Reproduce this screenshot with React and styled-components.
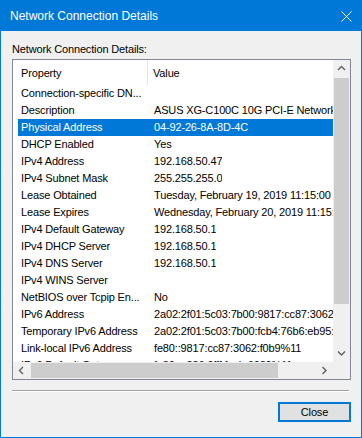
import React from 'react';
import styled, { createGlobalStyle } from 'styled-components';

const GlobalStyle = createGlobalStyle`
    html, body {
        margin: 0;
        padding: 0;
        background: #f0f0f0;
    }
    * {
        box-sizing: border-box;
    }
`;

const Window = styled.div`
    width: 362px;
    height: 438px;
    display: flex;
    flex-direction: column;
    background: #f0f0f0;
    border: 1px solid #0078d7;
    font-family: 'Liberation Sans', Arial, sans-serif;
    color: #000;
`;

const TitleBar = styled.div`
    height: 30px;
    flex-shrink: 0;
    display: flex;
    align-items: center;
    justify-content: space-between;
    padding: 0 9px 0 9px;
    background: #0078d7;
    color: #fff;
    font-size: 12px;
`;

const Body = styled.div`
    flex: 1;
    display: flex;
    flex-direction: column;
    padding: 10px 10px 15px 11px;
    font-size: 11px;
    letter-spacing: -0.15px;
`;

const Label = styled.div`
    height: 16px;
    line-height: 16px;
    margin-bottom: 2px;
`;

const ListBox = styled.div`
    height: 321px;
    border: 1px solid #828790;
    background: #fff;
    display: grid;
    grid-template-columns: 1fr 17px;
    grid-template-rows: 1fr 17px;
`;

const Viewport = styled.div`
    overflow: hidden;
    min-width: 0;
    min-height: 0;
`;

const HeaderRow = styled.div`
    width: 520px;
    height: 25px;
    display: flex;
    align-items: stretch;
`;

const HeaderCell = styled.div`
    width: ${p => p.$w}px;
    flex-shrink: 0;
    display: flex;
    align-items: center;
    padding-left: ${p => p.$pad}px;
    border-right: ${p => (p.$divider ? '1px solid #e5e5e5' : 'none')};
    white-space: nowrap;
`;

const Row = styled.div`
    width: 520px;
    height: 17px;
    margin-left: 5px;
    display: flex;
    align-items: center;
    line-height: 17px;
    white-space: nowrap;
    background: ${p => (p.$selected ? '#0078d7' : 'transparent')};
    color: ${p => (p.$selected ? '#fff' : '#000')};
`;

const Cell = styled.div`
    width: ${p => (p.$w ? `${p.$w}px` : 'auto')};
    flex-shrink: 0;
    padding-left: ${p => p.$pad}px;
    overflow: hidden;
`;

const VScroll = styled.div`
    display: flex;
    flex-direction: column;
    background: #f0f0f0;
`;

const HScroll = styled.div`
    display: flex;
    flex-direction: row;
    background: #f0f0f0;
`;

const ArrowButton = styled.div`
    width: 17px;
    height: 17px;
    flex-shrink: 0;
    display: flex;
    align-items: center;
    justify-content: center;
`;

const Track = styled.div`
    flex: 1;
    display: flex;
    flex-direction: ${p => (p.$vertical ? 'column' : 'row')};
    align-items: ${p => (p.$vertical ? 'center' : 'center')};
    padding: ${p => (p.$vertical ? '1px 0 0 0' : '0 0 0 1px')};
`;

const Thumb = styled.div`
    background: #cdcdcd;
    flex-shrink: 0;
    width: ${p => (p.$vertical ? '15px' : `${p.$size}px`)};
    height: ${p => (p.$vertical ? `${p.$size}px` : '15px')};
`;

const Corner = styled.div`
    background: #f0f0f0;
`;

const Separator = styled.div`
    margin-top: 10px;
    width: 337px;
    height: 2px;
    border-top: 1px solid #a0a0a0;
    border-bottom: 1px solid #fff;
`;

const Footer = styled.div`
    margin-top: 10px;
    display: flex;
    justify-content: flex-end;
`;

const Button = styled.button`
    width: 73px;
    height: 20px;
    padding: 0;
    border: 2px solid #0078d7;
    background: #e1e1e1;
    font-family: 'Liberation Sans', Arial, sans-serif;
    font-size: 11px;
    letter-spacing: -0.15px;
    color: #000;
`;

const Chevron = ({ dir }) => {
    const pts = {
        up: '1,5 4.5,1.5 8,5',
        down: '1,1.5 4.5,5 8,1.5',
        left: '5,1 1.5,4.5 5,8',
        right: '1.5,1 5,4.5 1.5,8',
    }[dir];
    const vertical = dir === 'up' || dir === 'down';
    return (
        <svg width={vertical ? 9 : 7} height={vertical ? 7 : 9} viewBox={vertical ? '0 0 9 7' : '0 0 7 9'}>
            <polyline points={pts} fill="none" stroke="#606060" strokeWidth="1.4" />
        </svg>
    );
};

const rows = [
    ['Connection-specific DN...', ''],
    ['Description', 'ASUS XG-C100C 10G PCI-E Network Adapter'],
    ['Physical Address', '04-92-26-8A-8D-4C'],
    ['DHCP Enabled', 'Yes'],
    ['IPv4 Address', '192.168.50.47'],
    ['IPv4 Subnet Mask', '255.255.255.0'],
    ['Lease Obtained', 'Tuesday, February 19, 2019 11:15:00 AM'],
    ['Lease Expires', 'Wednesday, February 20, 2019 11:15:00 AM'],
    ['IPv4 Default Gateway', '192.168.50.1'],
    ['IPv4 DHCP Server', '192.168.50.1'],
    ['IPv4 DNS Server', '192.168.50.1'],
    ['IPv4 WINS Server', ''],
    ['NetBIOS over Tcpip En...', 'No'],
    ['IPv6 Address', '2a02:2f01:5c03:7b00:9817:cc87:3062:f0b9'],
    ['Temporary IPv6 Address', '2a02:2f01:5c03:7b00:fcb4:76b6:eb95:2d1a'],
    ['Link-local IPv6 Address', 'fe80::9817:cc87:3062:f0b9%11'],
    ['IPv6 Default Gateway', 'fe80::a236:9fff:fecb:6030%11'],
];

function App() {
    return (
        <>
            <GlobalStyle />
            <Window>
                <TitleBar>
                    <span>Network Connection Details</span>
                    <svg width="11" height="11" viewBox="0 0 11 11">
                        <path d="M0.5 0.5 L10.5 10.5 M10.5 0.5 L0.5 10.5" stroke="#fff" strokeWidth="1" />
                    </svg>
                </TitleBar>
                <Body>
                    <Label>Network Connection Details:</Label>
                    <ListBox>
                        <Viewport>
                            <HeaderRow>
                                <HeaderCell $w={135} $pad={8} $divider>Property</HeaderCell>
                                <HeaderCell $w={380} $pad={5}>Value</HeaderCell>
                            </HeaderRow>
                            {rows.map(([prop, value], i) => (
                                <Row key={prop} $selected={i === 2}>
                                    <Cell $w={130} $pad={3}>{prop}</Cell>
                                    <Cell $pad={6}>{value}</Cell>
                                </Row>
                            ))}
                        </Viewport>
                        <VScroll>
                            <ArrowButton><Chevron dir="up" /></ArrowButton>
                            <Track $vertical>
                                <Thumb $vertical $size={226} />
                            </Track>
                            <ArrowButton><Chevron dir="down" /></ArrowButton>
                        </VScroll>
                        <HScroll>
                            <ArrowButton><Chevron dir="left" /></ArrowButton>
                            <Track>
                                <Thumb $size={247} />
                            </Track>
                            <ArrowButton><Chevron dir="right" /></ArrowButton>
                        </HScroll>
                        <Corner />
                    </ListBox>
                    <Separator />
                    <Footer>
                        <Button>Close</Button>
                    </Footer>
                </Body>
            </Window>
        </>
    );
}

export default App;
